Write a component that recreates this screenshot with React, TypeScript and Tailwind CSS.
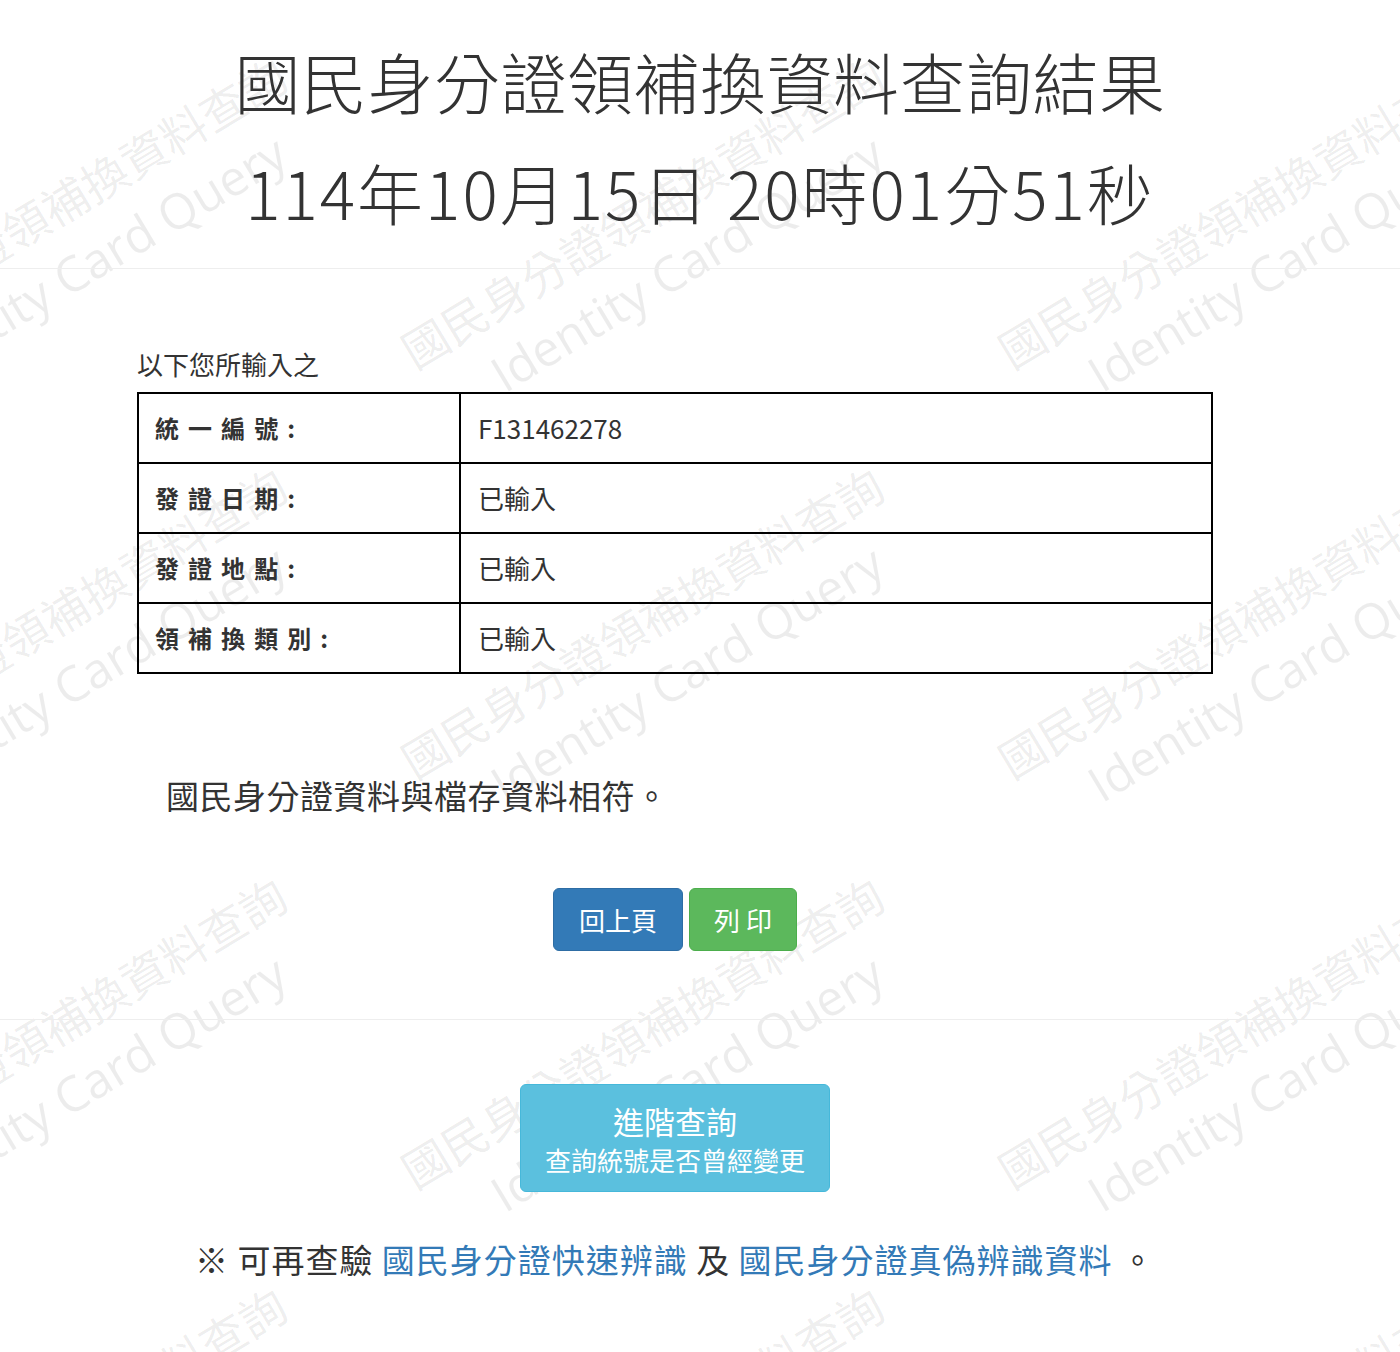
import React from "react";

const rows: [string, string][] = [
  ["統 一 編 號 :", "F131462278"],
  ["發 證 日 期 :", "已輸入"],
  ["發 證 地 點 :", "已輸入"],
  ["領 補 換 類 別 :", "已輸入"],
];

function Watermark() {
  const tiles: [number, number][] = [];
  for (let kx = -1; kx <= 2; kx++) {
    for (let ky = -1; ky <= 3; ky++) {
      tiles.push([417 + 597 * kx, 374 + 410 * ky]);
    }
  }
  return (
    <svg
      className="pointer-events-none absolute inset-0 h-full w-full"
      xmlns="http://www.w3.org/2000/svg"
    >
      {tiles.map(([x, y], i) => (
        <g key={i} transform={`translate(${x} ${y}) rotate(-31)`} fill="#000" fillOpacity={0.075}>
          <text x={0} y={-4} fontSize={46} fontFamily="'Noto Sans CJK TC', sans-serif">
            國民身分證領補換資料查詢
          </text>
          <text x={65} y={62} fontSize={49} fontFamily="'Open Sans', sans-serif">
            Identity Card Query
          </text>
        </g>
      ))}
    </svg>
  );
}

export default function App() {
  return (
    <div className="relative min-h-[1352px] overflow-hidden bg-white font-['Noto_Sans_CJK_TC',sans-serif] text-[#333]">
      <Watermark />
      <div className="relative">
        <h1 className="pt-[25px] text-center text-[66px] font-light leading-[111px] text-[#333]">
          <span className="tracking-[0.5px]">國民身分證領補換資料查詢結果</span>
          <br />
          <span className="tracking-[2px]">114年10月15日 20時01分51秒</span>
        </h1>
        <div className="mt-[21px] h-px bg-[#eeeeee]" />

        <div className="ml-[137px] w-[1076px]">
          <div className="mt-[77px] text-[26px] leading-[36px] text-[#333]">以下您所輸入之</div>
          <table className="mt-[10px] w-full border-collapse border-2 border-black">
            <tbody>
              {rows.map(([k, v]) => (
                <tr key={k}>
                  <td className="h-[70px] w-[322px] border-2 border-black pl-[16px] align-middle text-[24px] font-bold leading-none tracking-[1.8px] text-[#333]">
                    {k}
                  </td>
                  <td className="h-[70px] border-2 border-black pl-[17px] align-middle text-[26px] leading-none text-[#333]">
                    {v}
                  </td>
                </tr>
              ))}
            </tbody>
          </table>

          <div className="mt-[99px] pl-[29px] text-[33px] leading-[44px] tracking-[0.5px] text-[#333]">
            國民身分證資料與檔存資料相符。
          </div>

          <div className="mt-[71px] flex justify-center gap-[6px]">
            <button className="flex h-[63px] items-center rounded-[6px] border border-[#2e6da4] bg-[#337ab7] px-[25px] text-[26px] leading-none text-white">
              回上頁
            </button>
            <button className="flex h-[63px] items-center rounded-[6px] border border-[#4cae4c] bg-[#5cb85c] px-[24px] text-[26px] leading-none text-white">
              列 印
            </button>
          </div>
        </div>

        <div className="mt-[68px] h-px bg-[#eeeeee]" />

        <div className="ml-[137px] w-[1076px]">
          <div className="mt-[64px] flex justify-center">
            <button className="flex h-[108px] flex-col items-center rounded-[6px] border border-[#46b8da] bg-[#5bc0de] px-[24px] pt-[14px] text-white">
              <span className="text-[31px] leading-[44px]">進階查詢</span>
              <span className="text-[26px] leading-[34px]">查詢統號是否曾經變更</span>
            </button>
          </div>
          <div className="mt-[45px] text-center text-[33px] leading-[44px] tracking-[1px] text-[#333]">
            ※ 可再查驗 <a className="text-[#337ab7]">國民身分證快速辨識</a> 及{" "}
            <a className="text-[#337ab7]">國民身分證真偽辨識資料</a> 。
          </div>
        </div>
      </div>
    </div>
  );
}
